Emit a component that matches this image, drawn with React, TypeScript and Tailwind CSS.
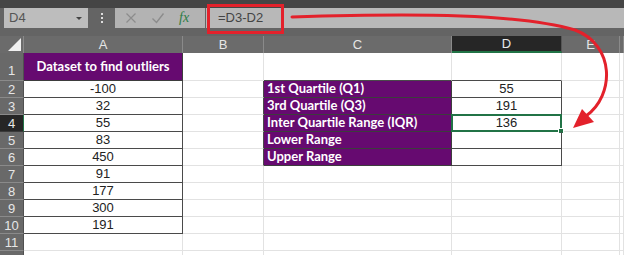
const COLS = [
  { key: "A", w: "w-[159px]" },
  { key: "B", w: "w-[81px]" },
  { key: "C", w: "w-[188px]" },
  { key: "D", w: "w-[110px]" },
  { key: "E", w: "w-[58px]" },
  { key: "F", w: "flex-1" },
];

const dataset = ["-100", "32", "55", "83", "450", "91", "177", "300", "191"];

const labels = [
  "1st Quartile (Q1)",
  "3rd Quartile (Q3)",
  "Inter Quartile Range (IQR)",
  "Lower Range",
  "Upper Range",
];
const values = ["55", "191", "136", "", ""];

function Cell({
  w,
  className = "",
  children,
}: {
  w: string;
  className?: string;
  children?: React.ReactNode;
}) {
  return (
    <div className={`${w} shrink-0 h-full border-r border-b ${className}`}>
      {children}
    </div>
  );
}

function RowHead({ n, active }: { n: number; active?: boolean }) {
  return (
    <div
      className={`w-[24px] shrink-0 h-full flex justify-center border-b border-r text-[13px] leading-none ${
        n === 1 ? "items-end pb-[3px]" : "items-center"
      } ${
        active
          ? "bg-[#262626] text-[#e8e8e8] border-b-[#3a3a3a] border-r-[#217346]"
          : "bg-[#696969] text-[#e6e6e6] border-b-[#8a8a8a] border-r-[#505050]"
      }`}
    >
      {n <= 11 ? n : ""}
    </div>
  );
}

function Row({ n }: { n: number }) {
  const h = n === 1 ? "h-[28px]" : "h-[17px]";
  const ci = n - 2; // index in C/D table
  const inStats = ci >= 0 && ci < 5;
  const inData = n >= 1 && n <= 10;

  return (
    <div className={`flex ${h}`}>
      <RowHead n={n} active={n === 4} />
      {/* A */}
      {n === 1 ? (
        <Cell
          w={COLS[0].w}
          className="bg-[#660a70] border-[#3d3d3d] flex items-center justify-center font-['Lato'] font-bold text-[13px] text-white"
        >
          Dataset to find outliers
        </Cell>
      ) : (
        <Cell
          w={COLS[0].w}
          className={`flex items-center justify-center text-[13px] text-[#222] ${
            inData ? "border-[#4a4a4a]" : "border-[#e2e2e2]"
          }`}
        >
          {inData ? dataset[n - 2] : ""}
        </Cell>
      )}
      {/* B */}
      <Cell
        w={COLS[1].w}
        className={`border-b-[#e2e2e2] ${
          inStats ? "border-r-[#4a4a4a]" : "border-r-[#e2e2e2]"
        }`}
      />
      {/* C */}
      {inStats ? (
        <Cell
          w={COLS[2].w}
          className="bg-[#660a70] border-[#3d3d3d] flex items-center pl-[3px] font-['Lato'] font-bold text-[13px] text-white"
        >
          {labels[ci]}
        </Cell>
      ) : (
        <Cell
          w={COLS[2].w}
          className={`border-r-[#e2e2e2] ${
            n === 1 ? "border-b-[#4a4a4a]" : "border-b-[#e2e2e2]"
          }`}
        />
      )}
      {/* D */}
      {inStats ? (
        <Cell
          w={COLS[3].w}
          className="relative border-[#4a4a4a] flex items-center justify-center text-[13px] text-[#222]"
        >
          {values[ci]}
          {n === 4 && (
            <div className="absolute -left-[1px] -top-[1px] -right-[1px] -bottom-[1px] border-2 border-[#217346]">
              <div className="absolute -right-[4px] -bottom-[4px] w-[6px] h-[6px] bg-[#217346] border border-white" />
            </div>
          )}
        </Cell>
      ) : (
        <Cell
          w={COLS[3].w}
          className={`border-r-[#e2e2e2] ${
            n === 1 ? "border-b-[#4a4a4a]" : "border-b-[#e2e2e2]"
          }`}
        />
      )}
      {/* E, F */}
      <Cell w={COLS[4].w} className="border-[#e2e2e2]" />
      <Cell w={COLS[5].w} className="border-[#e2e2e2]" />
    </div>
  );
}

export default function App() {
  return (
    <div className="relative w-[624px] h-[255px] overflow-hidden bg-white font-['Liberation_Sans',Arial,sans-serif]">
      {/* title strip */}
      <div className="h-[8px] bg-[#454545]" />

      {/* formula bar */}
      <div className="h-[21px] bg-[#646464] flex items-stretch pl-[4px] pb-[1px]">
        <div className="w-[84px] bg-[#bdbdbd] flex items-center justify-between pl-[5px] pr-[6px] text-[13px] text-[#555]">
          <span>D4</span>
          <span className="w-0 h-0 border-l-[3px] border-r-[3px] border-t-[3px] border-l-transparent border-r-transparent border-t-[#444]" />
        </div>
        <div className="w-[27px] flex flex-col items-center justify-center gap-[2px]">
          <span className="w-[2px] h-[2px] bg-[#ddd]" />
          <span className="w-[2px] h-[2px] bg-[#ddd]" />
          <span className="w-[2px] h-[2px] bg-[#ddd]" />
        </div>
        <div className="w-[90px] bg-[#b3b3b3] flex items-center pl-[10px] gap-[14px]">
          <svg width="12" height="12" viewBox="0 0 12 12" fill="none" stroke="#8c8c8c" strokeWidth="1.2">
            <path d="M1.5 1.5l9 9M10.5 1.5l-9 9" />
          </svg>
          <svg width="14" height="12" viewBox="0 0 14 12" fill="none" stroke="#8c8c8c" strokeWidth="1.4">
            <path d="M1.5 6.5l4 4 7-9" />
          </svg>
          <span className="font-['Liberation_Serif',serif] italic text-[14px] text-[#2e7d45] leading-none">
            fx
          </span>
        </div>
        <div className="flex-1 ml-[1px] bg-[#b8b8b8] flex items-center pl-[12px] text-[13px] text-[#444]">
          =D3-D2
        </div>
      </div>

      {/* gap */}
      <div className="h-[7px] bg-[#646464]" />

      {/* column headers */}
      <div className="flex h-[17px] bg-[#6b6b6b]">
        <div className="w-[24px] shrink-0 h-full relative border-r border-[#8a8a8a]">
          <div className="absolute right-[2px] bottom-[2px] w-0 h-0 border-b-[13px] border-l-[13px] border-b-[#f0f0f0] border-l-transparent" />
        </div>
        {COLS.map((c) => (
          <div
            key={c.key}
            className={`${c.w} shrink-0 h-full flex items-center justify-center border-r text-[13px] ${
              c.key === "D"
                ? "bg-[#262626] text-[#e8e8e8] border-b-2 border-b-[#217346] border-r-[#555]"
                : "text-[#e6e6e6] border-[#8a8a8a]"
            }`}
          >
            {c.key === "F" ? "" : c.key}
          </div>
        ))}
      </div>

      {/* rows */}
      {Array.from({ length: 12 }, (_, i) => (
        <Row key={i} n={i + 1} />
      ))}

      {/* red highlight box */}
      <div className="absolute left-[207px] top-[4px] w-[77px] h-[30px] border-[3px] border-[#e3212b]" />

      {/* red arrow */}
      <svg
        className="absolute inset-0 pointer-events-none"
        width="624"
        height="255"
        viewBox="0 0 624 255"
      >
        <path
          d="M292 17 C420 13 520 14 575 30 C615 45 615 95 586 116"
          fill="none"
          stroke="#e3212b"
          strokeWidth="3"
          strokeLinecap="round"
        />
        <polygon points="573,128 582,109 594,122" fill="#e3212b" />
      </svg>
    </div>
  );
}
